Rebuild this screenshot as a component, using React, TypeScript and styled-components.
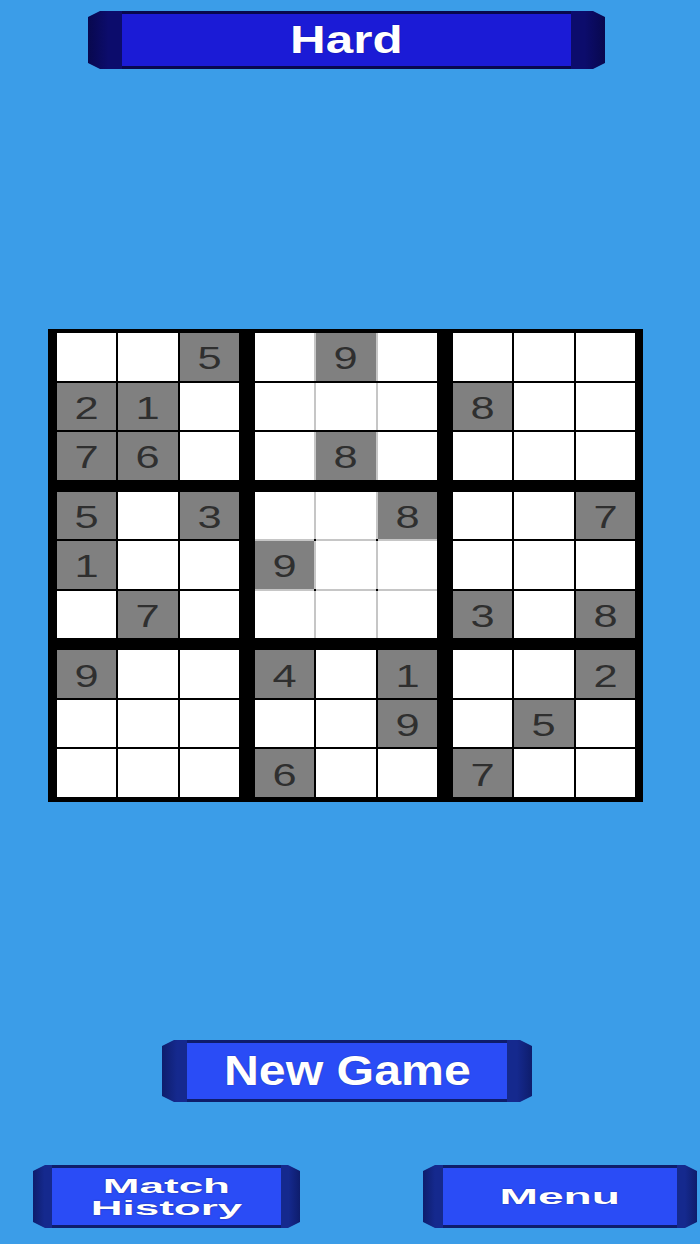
import styled, { createGlobalStyle } from "styled-components";

const PAGE_BG = "#3b9de8";
const GIVEN_BG = "#808080";
const LIGHT_LINE = "#c6c6c6";

// 0 = empty cell, anything else is a given clue
const puzzle: number[][] = [
  [0, 0, 5, 0, 9, 0, 0, 0, 0],
  [2, 1, 0, 0, 0, 0, 8, 0, 0],
  [7, 6, 0, 0, 8, 0, 0, 0, 0],
  [5, 0, 3, 0, 0, 8, 0, 0, 7],
  [1, 0, 0, 9, 0, 0, 0, 0, 0],
  [0, 7, 0, 0, 0, 0, 3, 0, 8],
  [9, 0, 0, 4, 0, 1, 0, 0, 2],
  [0, 0, 0, 0, 0, 9, 0, 5, 0],
  [0, 0, 0, 6, 0, 0, 7, 0, 0],
];

// some boxes draw their inner cell lines lighter
const lightLines: Record<number, { v: boolean; h: boolean }> = {
  1: { v: true, h: false },
  4: { v: true, h: true },
};

type Palette = { face: string; cap: string; edge: string };

const titlePalette: Palette = { face: "#1b1bd6", cap: "#0c0c6c", edge: "#08084e" };
const actionPalette: Palette = { face: "#2a4cf6", cap: "#15298e", edge: "#0e1d6c" };

const GlobalStyle = createGlobalStyle`
  html, body {
    margin: 0;
    padding: 0;
    background: ${PAGE_BG};
  }
  body {
    font-family: "Liberation Sans", Arial, sans-serif;
  }
`;

const Screen = styled.div`
  width: 700px;
  height: 1244px;
  box-sizing: border-box;
  padding-top: 11px;
  display: flex;
  flex-direction: column;
  align-items: flex-start;
  background: ${PAGE_BG};
  overflow: hidden;
`;

const Pill = styled.div<{ $width: number; $height: number; $offset?: number; $top?: number }>`
  width: ${(p) => p.$width}px;
  height: ${(p) => p.$height}px;
  margin-left: ${(p) => p.$offset ?? 0}px;
  margin-top: ${(p) => p.$top ?? 0}px;
  display: flex;
  align-items: stretch;
  flex-shrink: 0;
`;

const Cap = styled.div<{ $width: number; $side: "left" | "right"; $p: Palette }>`
  width: ${(p) => p.$width}px;
  flex-shrink: 0;
  background: ${(p) =>
    p.$side === "left"
      ? `linear-gradient(90deg, ${p.$p.edge}, ${p.$p.cap} 60%)`
      : `linear-gradient(90deg, ${p.$p.cap} 40%, ${p.$p.edge})`};
  clip-path: ${(p) =>
    p.$side === "left"
      ? "polygon(12px 0, 100% 0, 100% 100%, 12px 100%, 0 calc(100% - 6px), 0 6px)"
      : "polygon(0 0, calc(100% - 12px) 0, 100% 6px, 100% calc(100% - 6px), calc(100% - 12px) 100%, 0 100%)"};
`;

const Face = styled.div<{ $p: Palette }>`
  flex: 1;
  display: flex;
  align-items: center;
  justify-content: center;
  background: ${(p) => p.$p.face};
  border-top: 3px solid ${(p) => p.$p.edge};
  border-bottom: 3px solid ${(p) => p.$p.edge};
`;

const Label = styled.span<{ $size: number; $stretch: number; $line?: number }>`
  display: inline-block;
  color: #ffffff;
  font-family: "Liberation Sans", Arial, sans-serif;
  font-weight: bold;
  font-size: ${(p) => p.$size}px;
  line-height: ${(p) => p.$line ?? p.$size}px;
  text-align: center;
  white-space: nowrap;
  transform: scaleX(${(p) => p.$stretch});
  text-shadow: 0 0 1px rgba(0, 0, 40, 0.6);
`;

const Board = styled.div`
  margin-top: 260px;
  margin-left: 48px;
  width: 595px;
  height: 473px;
  box-sizing: border-box;
  padding: 4px 8px 5px 9px;
  background: #000;
  display: grid;
  grid-template-columns: repeat(3, 1fr);
  grid-template-rows: repeat(3, 1fr);
  column-gap: 16px;
  row-gap: 12px;
`;

const Box = styled.div`
  display: grid;
  grid-template-columns: repeat(3, 1fr);
  grid-template-rows: repeat(3, 1fr);
  gap: 2px;
  background: #000;
`;

const Cell = styled.div<{ $given: boolean; $shadow: string }>`
  display: flex;
  align-items: center;
  justify-content: center;
  background: ${(p) => (p.$given ? GIVEN_BG : "#ffffff")};
  box-shadow: ${(p) => p.$shadow};
`;

const Digit = styled.span`
  display: inline-block;
  color: #2f2f2f;
  font-family: "Liberation Sans", Arial, sans-serif;
  font-size: 31px;
  line-height: 31px;
  margin-top: 4px;
  transform: scaleX(1.4);
`;

const Footer = styled.div`
  margin-top: 63px;
  width: 100%;
  box-sizing: border-box;
  padding: 0 3px 0 33px;
  display: flex;
  justify-content: space-between;
`;

type ButtonProps = {
  palette: Palette;
  width: number;
  height: number;
  cap: number;
  offset?: number;
  top?: number;
  children: React.ReactNode;
};

const GameButton = ({ palette, width, height, cap, offset, top, children }: ButtonProps) => (
  <Pill $width={width} $height={height} $offset={offset} $top={top}>
    <Cap $width={cap} $side="left" $p={palette} />
    <Face $p={palette}>{children}</Face>
    <Cap $width={cap} $side="right" $p={palette} />
  </Pill>
);

const renderBox = (box: number) => {
  const br = Math.floor(box / 3) * 3;
  const bc = (box % 3) * 3;
  const light = lightLines[box];
  const cells = [];
  for (let r = 0; r < 3; r++) {
    for (let c = 0; c < 3; c++) {
      const value = puzzle[br + r][bc + c];
      const shadows: string[] = [];
      if (light?.v && c > 0) shadows.push(`-2px 0 0 ${LIGHT_LINE}`);
      if (light?.h && r > 0) shadows.push(`0 -2px 0 ${LIGHT_LINE}`);
      cells.push(
        <Cell key={`${r}-${c}`} $given={value > 0} $shadow={shadows.join(", ") || "none"}>
          {value > 0 && <Digit>{value}</Digit>}
        </Cell>
      );
    }
  }
  return <Box key={box}>{cells}</Box>;
};

const App = () => {
  return (
    <>
      <GlobalStyle />
      <Screen>
        <GameButton palette={titlePalette} width={517} height={58} cap={34} offset={88}>
          <Label $size={38} $stretch={1.3}>
            Hard
          </Label>
        </GameButton>

        <Board>{Array.from({ length: 9 }, (_, i) => renderBox(i))}</Board>

        <GameButton palette={actionPalette} width={370} height={62} cap={25} offset={162} top={238}>
          <Label $size={42} $stretch={1.15}>
            New Game
          </Label>
        </GameButton>

        <Footer>
          <GameButton palette={actionPalette} width={267} height={63} cap={19}>
            <Label $size={20} $stretch={2.2} $line={22}>
              Match
              <br />
              History
            </Label>
          </GameButton>
          <GameButton palette={actionPalette} width={274} height={63} cap={20}>
            <Label $size={22} $stretch={2.1}>
              Menu
            </Label>
          </GameButton>
        </Footer>
      </Screen>
    </>
  );
};

export default App;
